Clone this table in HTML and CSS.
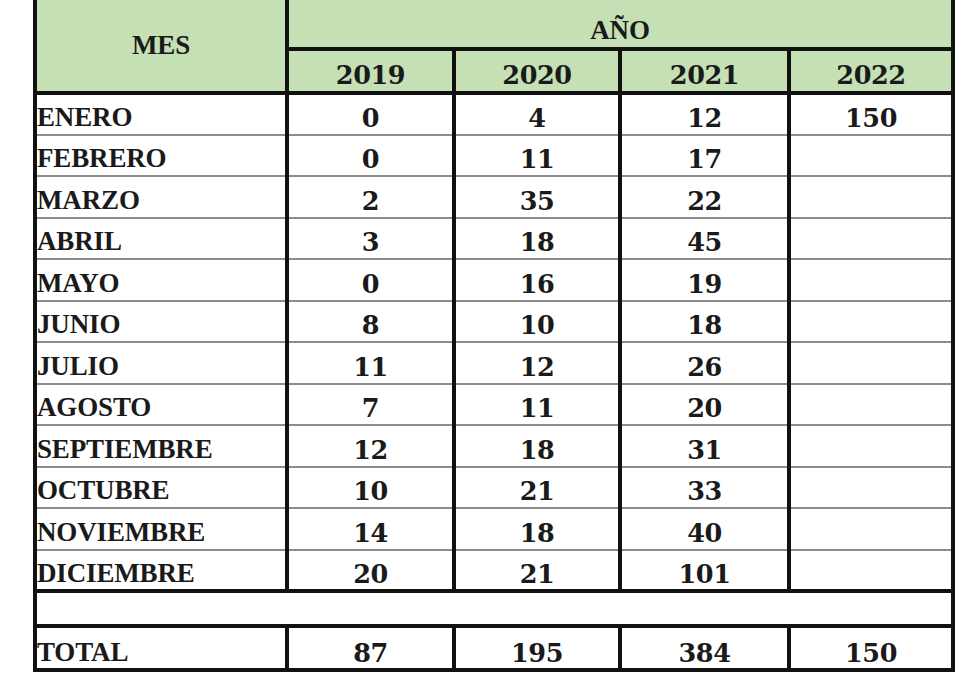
FILE: index.html
```html
<!DOCTYPE html>
<html lang="es">
<head>
<meta charset="utf-8">
<title>Tabla por mes y año</title>
<link rel="stylesheet" href="styles.css">
</head>
<body>
<table class="sheet">
  <colgroup>
    <col class="c-mes">
    <col class="c-y19">
    <col class="c-y20">
    <col class="c-y21">
    <col class="c-y22">
  </colgroup>
  <thead>
    <tr class="r-ano">
      <th rowspan="2" class="h-mes">MES</th>
      <th colspan="4" class="h-ano">AÑO</th>
    </tr>
    <tr class="r-years">
      <th class="num">2019</th>
      <th class="num">2020</th>
      <th class="num">2021</th>
      <th class="num">2022</th>
    </tr>
  </thead>
  <tbody class="data">
    <tr><td class="mes">ENERO</td><td class="num">0</td><td class="num">4</td><td class="num">12</td><td class="num">150</td></tr>
    <tr><td class="mes">FEBRERO</td><td class="num">0</td><td class="num">11</td><td class="num">17</td><td class="num"></td></tr>
    <tr><td class="mes">MARZO</td><td class="num">2</td><td class="num">35</td><td class="num">22</td><td class="num"></td></tr>
    <tr><td class="mes">ABRIL</td><td class="num">3</td><td class="num">18</td><td class="num">45</td><td class="num"></td></tr>
    <tr><td class="mes">MAYO</td><td class="num">0</td><td class="num">16</td><td class="num">19</td><td class="num"></td></tr>
    <tr><td class="mes">JUNIO</td><td class="num">8</td><td class="num">10</td><td class="num">18</td><td class="num"></td></tr>
    <tr><td class="mes">JULIO</td><td class="num">11</td><td class="num">12</td><td class="num">26</td><td class="num"></td></tr>
    <tr><td class="mes">AGOSTO</td><td class="num">7</td><td class="num">11</td><td class="num">20</td><td class="num"></td></tr>
    <tr><td class="mes">SEPTIEMBRE</td><td class="num">12</td><td class="num">18</td><td class="num">31</td><td class="num"></td></tr>
    <tr><td class="mes">OCTUBRE</td><td class="num">10</td><td class="num">21</td><td class="num">33</td><td class="num"></td></tr>
    <tr><td class="mes">NOVIEMBRE</td><td class="num">14</td><td class="num">18</td><td class="num">40</td><td class="num"></td></tr>
    <tr class="last"><td class="mes">DICIEMBRE</td><td class="num">20</td><td class="num">21</td><td class="num">101</td><td class="num"></td></tr>
  </tbody>
  <tbody class="gap">
    <tr><td colspan="5"></td></tr>
  </tbody>
  <tfoot>
    <tr class="r-total"><td class="mes">TOTAL</td><td class="num">87</td><td class="num">195</td><td class="num">384</td><td class="num">150</td></tr>
  </tfoot>
</table>
</body>
</html>
```

FILE: styles.css
```css
html, body {
  margin: 0;
  padding: 0;
  background: #ffffff;
}

.sheet {
  border-collapse: collapse;
  table-layout: fixed;
  width: 918px;
  margin-left: 33px;
  color: #1a1a1a;
  font-family: "Liberation Serif", "Times New Roman", serif;
  font-weight: bold;
  font-size: 27px;
  letter-spacing: -0.15px;
}

.c-mes { width: 252px; }
.c-y19 { width: 167px; }
.c-y20 { width: 166px; }
.c-y21 { width: 169px; }
.c-y22 { width: 164px; }

.sheet th,
.sheet td {
  padding: 0;
  border: 4px solid #111111;
  text-align: center;
  vertical-align: middle;
  line-height: 1.1;
}

.sheet thead th {
  background: #c5e0b4;
  font-weight: bold;
}

.sheet thead .r-ano th { border-top: none; }
.r-ano { height: 49px; }
.h-mes { padding-top: 0; }
.sheet .h-ano { padding-top: 14px; }

.r-years { height: 44px; }
.r-years th { padding-top: 8px; }

.num {
  font-family: "DejaVu Serif", "Liberation Serif", serif;
  font-size: 25.5px;
  letter-spacing: -0.4px;
}

.data tr { height: 41.5px; }
.data td {
  padding-top: 8px;
  border-top: 2px solid #8d8d8d;
  border-bottom: 2px solid #8d8d8d;
}
.data tr:first-child td { border-top: 4px solid #111111; }
.data tr.last td { border-bottom: 4px solid #111111; }

.sheet td.mes {
  text-align: left;
  padding-left: 0;
}

.gap tr { height: 35px; }
.gap td { padding: 0; }

.r-total { height: 42px; }
.r-total td { padding-top: 10px; }
```
